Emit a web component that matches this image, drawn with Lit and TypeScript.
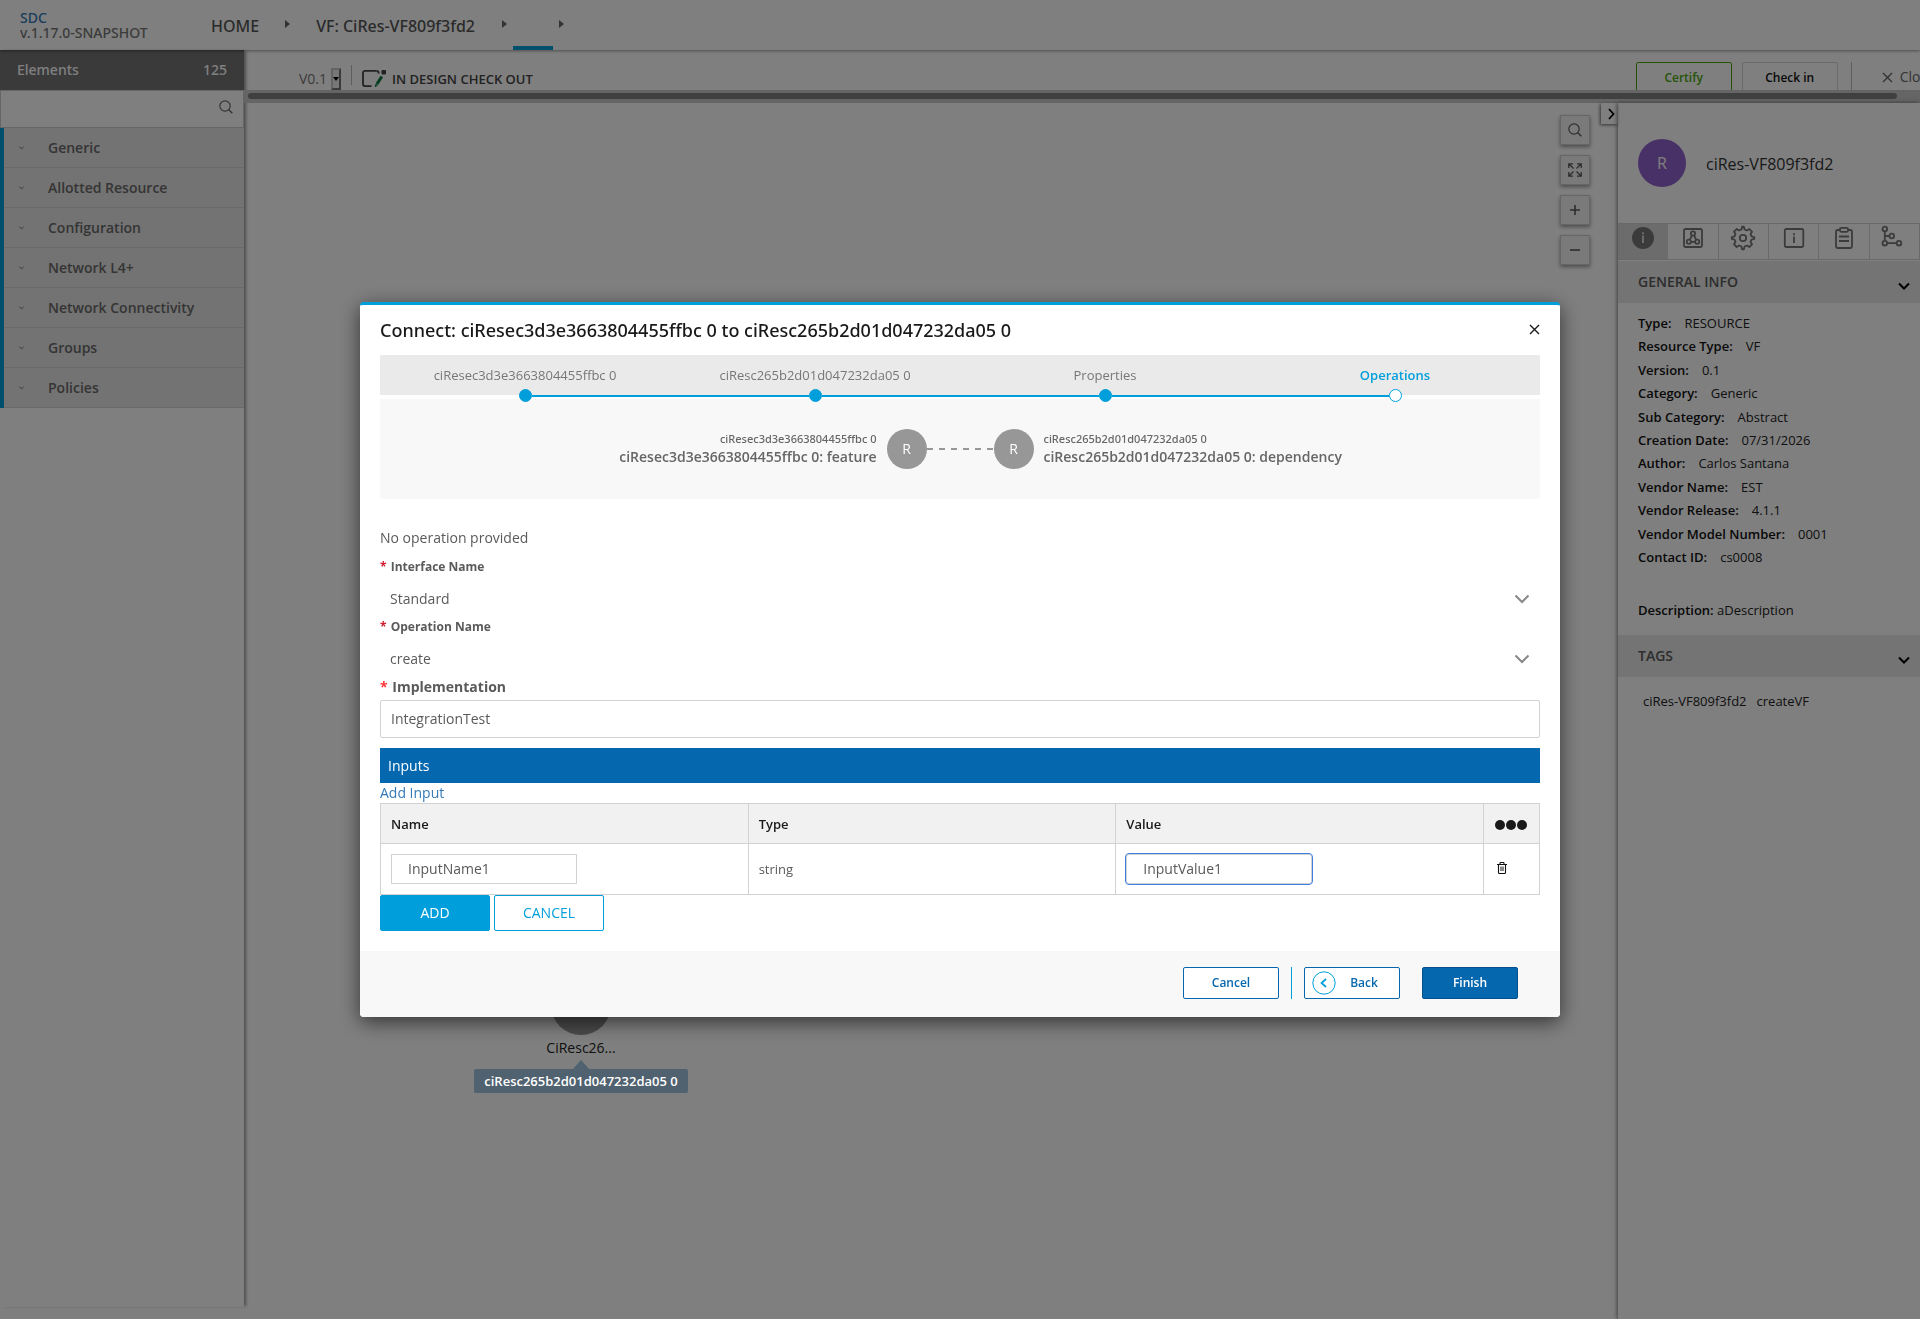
import { LitElement, html, css, svg } from "lit";
import { customElement, state } from "lit/decorators.js";
import { classMap } from "lit/directives/class-map.js";

const CATEGORIES = [
  "Generic",
  "Allotted Resource",
  "Configuration",
  "Network L4+",
  "Network Connectivity",
  "Groups",
  "Policies",
];

const DETAILS: [string, string][] = [
  ["Type:", "RESOURCE"],
  ["Resource Type:", "VF"],
  ["Version:", "0.1"],
  ["Category:", "Generic"],
  ["Sub Category:", "Abstract"],
  ["Creation Date:", "07/31/2026"],
  ["Author:", "Carlos Santana"],
  ["Vendor Name:", "EST"],
  ["Vendor Release:", "4.1.1"],
  ["Vendor Model Number:", "0001"],
  ["Contact ID:", "cs0008"],
];

const FROM_NAME = "ciResec3d3e3663804455ffbc 0";
const TO_NAME = "ciResc265b2d01d047232da05 0";
const STEPS = [FROM_NAME, TO_NAME, "Properties", "Operations"];

const icon = (width: number, height: number, body: unknown) => html`<svg
  class="icon"
  width=${width}
  height=${height}
  viewBox="0 0 ${width} ${height}"
  fill="none"
  stroke="currentColor"
  aria-hidden="true"
>
  ${body}
</svg>`;

const searchIcon = () =>
  icon(14, 14, svg`<circle cx="6" cy="6" r="5.2" stroke-width="1.2"/><path d="M9.8 9.8 13.3 13.3" stroke-width="1.4"/>`);
const expandIcon = () =>
  icon(14, 14, svg`<path stroke-width="1.3" d="M.8 5V.8H5M9 .8h4.2V5M13.2 9v4.200H9M5 13.200H.8V9M1 1l4.500 4.500M13 1 8.500 5.500M13 13 8.500 8.500M1 13l4.500-4.500"/>`);
const plusIcon = () => icon(12, 12, svg`<path stroke-width="1.6" d="M6 1v10M1 6h10"/>`);
const minusIcon = () => icon(12, 12, svg`<path stroke-width="1.6" d="M1 6h10"/>`);
const crossIcon = () => icon(11, 11, svg`<path stroke-width="1.4" d="M1 1l9 9M10 1l-9 9"/>`);
const chevronDown = () => icon(12, 8, svg`<path stroke-width="2" d="M1 1.500l5 5 5-5"/>`);
const chevronRight = () => icon(7, 12, svg`<path stroke-width="1.800" d="M1 1l4.500 5L1 11"/>`);
const selectChevron = () => icon(16, 10, svg`<path stroke-width="2" d="M1.500 1.500 8 8l6.500-6.500"/>`);
const tinyChevron = () => icon(5, 4, svg`<path d="M.5 1l2 1.700 2-1.700"/>`);
const caret = () => icon(5, 8, svg`<path d="M0 0l5 4-5 4z" fill="currentColor" stroke="none"/>`);

const checkoutIcon = () =>
  icon(25, 20, svg`
    <path stroke-width="1.800" d="M14.500 1.900H3a2 2 0 0 0-2 2v11.200a2 2 0 0 0 2 2h6.500"/>
    <path stroke-width="1.800" d="M14.500 1.900q2.200 0 2.200 2.600"/>
    <path d="M20 1.500h3.500V5H20z" fill="currentColor" stroke-width="1"/>
    <path class="pen" d="M19.800 7.500 15 15" stroke-width="3"/>
    <path class="pen" d="M13.200 17.800l.8-2.800 1.600 1.200z" stroke-width="1"/>`);

const trashIcon = () =>
  icon(10, 12, svg`
    <path d="M0 2.500h10M3 2.500V1.300q0-.8.800-.8h2.400q.8 0 .8.800v1.200M1.500 2.500v8q0 1 1 1h5q1 0 1-1v-8" stroke-width="1.100"/>
    <path d="M3 4.500h4v4.500H3z" fill="#888" stroke="none"/>`);

const backIcon = () =>
  icon(24, 24, svg`<circle cx="12" cy="12" r="11.200" stroke-width="1"/><path stroke-width="1.700" d="M14 8l-4.500 4 4.500 4"/>`);

const GEAR =
  "M13.90 1.76 L14.55 4.50 L16.94 5.49 L19.33 4.02 L22.00 6.67 L20.53 9.06 L21.52 11.45 L24.25 12.10 L24.25 13.90 L21.52 14.55 L20.53 16.94 L22.00 19.33 L19.33 22.00 L16.94 20.53 L14.55 21.52 L13.90 24.25 L12.10 24.25 L11.45 21.52 L9.06 20.53 L6.67 22.00 L4.02 19.33 L5.49 16.94 L4.50 14.55 L1.76 13.90 L1.76 12.10 L4.50 11.45 L5.49 9.06 L4.02 6.67 L6.67 4.02 L9.06 5.49 L11.45 4.50 L12.10 1.76 Z";

const TABS = [
  {
    label: "Information",
    art: svg`<circle cx="13" cy="13" r="11" fill="currentColor" stroke="none"/><path class="cut" d="M13 10.500V18M13 7.200v2" stroke-width="2"/>`,
  },
  {
    label: "Composition",
    art: svg`<rect x="4" y="4" width="18" height="18" rx="1.500"/><circle cx="13" cy="8.500" r="2.100"/><circle cx="8.800" cy="16.800" r="2.100"/><circle cx="17.200" cy="16.800" r="2.100"/><path d="M12 10.400 9.700 14.900M14 10.400l2.300 4.500M11 16.800h4"/>`,
  },
  {
    label: "Settings",
    art: svg`<path d=${GEAR} stroke-linejoin="round"/><circle cx="13" cy="13" r="3.200"/>`,
  },
  {
    label: "Details",
    art: svg`<rect x="3.800" y="4" width="18.500" height="18" rx="1.500"/><path d="M13 11.500V18M13 8.200v2"/>`,
  },
  {
    label: "Artifacts",
    art: svg`<path d="M9 5H6.500Q5 5 5 6.500v15Q5 23 6.500 23h13q1.500 0 1.500-1.500v-15Q21 5 19.500 5H17"/><rect x="9" y="2.800" width="8" height="4" rx="1.200"/><path d="M8 11.500h10M8 16h10"/>`,
  },
  {
    label: "Relations",
    art: svg`<circle cx="3.800" cy="4" r="2.300"/><circle cx="3.800" cy="18.200" r="2.300"/><circle cx="10.800" cy="11" r="2.300"/><circle cx="18" cy="18.200" r="2.300"/><path d="M3.800 6.300v9.600M6 18.200h9.600M3.800 11h4.600"/>`,
  },
];

@customElement("app-root")
export class AppRoot extends LitElement {
  static styles = css`
    :host {
      display: block;
      font-family: "Open Sans", "Noto Sans", sans-serif;
      font-size: 14px;
      line-height: 20px;
      color: #5a5a5a;
    }
    * {
      box-sizing: border-box;
    }
    button,
    input,
    select {
      font: inherit;
      color: inherit;
      margin: 0;
      padding: 0;
      border: 0;
      background: none;
      border-radius: 0;
    }
    button {
      cursor: pointer;
    }
    select {
      appearance: none;
    }
    a {
      text-decoration: none;
      color: inherit;
    }
    h1,
    h2,
    p,
    dl,
    dd,
    ol,
    ul {
      margin: 0;
      padding: 0;
      list-style: none;
      font-weight: 400;
    }
    .icon {
      display: block;
      flex: none;
    }
    .brand,
    .crumbs,
    .side-title,
    .modal-head h1,
    .end small {
      font-family: "Noto Sans", "Open Sans", sans-serif;
      font-weight: 500;
    }

    .page {
      display: flex;
      flex-direction: column;
      min-height: 100vh;
      background: #fff;
    }

    .top {
      display: flex;
      height: 50px;
      flex: none;
      box-shadow: 0 1px 3px rgba(0, 0, 0, 0.4);
      z-index: 1;
    }
    .brand {
      width: 211px;
      padding: 10px 20px;
      line-height: 15px;
      color: #777;
    }
    .brand a {
      display: block;
      color: #337ab7;
    }
    .crumbs {
      display: flex;
      align-items: center;
      font-size: 16px;
      color: #555;
    }
    .crumbs li {
      display: flex;
      align-items: center;
      height: 50px;
    }
    .crumbs a {
      padding-top: 2px;
    }
    .crumbs .sep {
      color: #666;
      padding: 0 26px 3px 26px;
    }
    .crumbs .current {
      width: 40px;
      border-bottom: 4px solid #009fdb;
    }
    .crumbs .sep.tight {
      padding: 0 6px 3px 27px;
    }
    .crumbs .sep.end {
      padding-left: 6px;
    }

    .content {
      display: flex;
      flex: 1;
    }
    .side {
      display: flex;
      flex-direction: column;
      width: 244px;
      flex: none;
      margin-bottom: 12px;
      background: #fff;
      box-shadow: 3px 0 3px -1px rgba(0, 0, 0, 0.4);
    }
    .side-title {
      display: flex;
      justify-content: space-between;
      align-items: center;
      height: 40px;
      padding: 0 17px;
      background: #747474;
      color: #fff;
    }
    .search {
      display: flex;
      align-items: center;
      height: 38px;
      padding-right: 10px;
      border: 1px solid #cdcdcd;
      color: #666;
    }
    .search input {
      flex: 1;
      min-width: 0;
      height: 34px;
      padding: 0 10px;
      outline: none;
    }
    .search button {
      padding-bottom: 4px;
    }
    .cats {
      border-left: 4px solid #009fdb;
    }
    .cats button {
      display: grid;
      grid-template-columns: 29px 1fr;
      align-items: center;
      width: 100%;
      height: 40px;
      padding-left: 15px;
      text-align: left;
      font-weight: 600;
      color: #6a6a6a;
      background: #e6e6e6;
      border-bottom: 1px solid #d2d2d2;
    }

    .main {
      display: flex;
      flex-direction: column;
      flex: 1;
      min-width: 0;
    }
    .toolbar {
      display: flex;
      justify-content: space-between;
      height: 40px;
      overflow: hidden;
    }
    .tools {
      display: flex;
      align-items: center;
      height: 57px;
      flex: none;
    }
    .version {
      display: grid;
      align-items: center;
      width: 42px;
      height: 22px;
      margin-left: 55px;
      color: #777;
    }
    .version select,
    .version span {
      grid-area: 1 / 1;
    }
    .version select {
      width: 42px;
    }
    .version span {
      display: flex;
      align-items: center;
      justify-content: center;
      justify-self: end;
      width: 10px;
      height: 22px;
      background: #efefef;
      border: 2px outset #c8c8c8;
      color: #000;
      pointer-events: none;
    }
    .rule {
      width: 1px;
      height: 20px;
      background: #bbb;
    }
    .tools .rule {
      margin: 0 10px 8px 10px;
    }
    .status {
      display: flex;
      align-items: center;
      gap: 5px;
      font-size: 13px;
      font-weight: 600;
      color: #444;
    }
    .pen {
      stroke: #067a3e;
    }
    .actions {
      display: flex;
      padding-top: 12px;
      flex: none;
      margin-right: -15px;
    }
    .actions .btn {
      width: 96px;
      height: 32px;
      margin-right: 10px;
      font-size: 12px;
      font-weight: 600;
      border: 1px solid #d2d2d2;
      border-radius: 2px;
      color: #111;
    }
    .actions .btn.ok {
      border-color: #4ca90c;
      color: #4ca90c;
    }
    .actions .rule {
      height: 32px;
      margin: 0 30px 0 3px;
    }
    .actions .close {
      display: flex;
      align-items: center;
      gap: 7px;
      height: 30px;
      color: #666;
    }
    .scroll {
      height: 13px;
      padding: 3px 23px 0 4px;
      background: #cacaca;
    }
    .scroll div {
      height: 6px;
      border-radius: 3px;
      background: #7c8280;
    }

    .work {
      display: flex;
      flex: 1;
    }
    .canvas {
      position: relative;
      display: flex;
      flex: 1;
      justify-content: flex-end;
      align-items: flex-start;
      gap: 11px;
    }
    .zooms {
      display: grid;
      gap: 10px;
      padding-top: 12px;
    }
    .zooms button {
      display: grid;
      place-items: center;
      width: 30px;
      height: 30px;
      background: #f4f4f4;
      border: 1px solid #ccc;
      box-shadow: 0 2px 4px rgba(0, 0, 0, 0.4);
    }
    .fold {
      display: grid;
      place-items: center;
      width: 17px;
      height: 21px;
      padding-left: 3px;
      color: #000;
      box-shadow: -1px 1px 3px rgba(0, 0, 0, 0.6);
    }
    .node {
      position: absolute;
      left: 230px;
      top: 872px;
      display: flex;
      flex-direction: column;
      align-items: center;
      width: 214px;
      color: #222;
    }
    .node .disc {
      width: 60px;
      height: 60px;
      border-radius: 50%;
      background: #959595;
    }
    .node .name {
      margin: 3px 0 2px;
    }
    .tip {
      position: relative;
      z-index: 20;
      display: flex;
      flex-direction: column;
      align-items: center;
      font-size: 13px;
      line-height: 24px;
      font-weight: 600;
      white-space: nowrap;
      color: #fff;
    }
    .tip i {
      border: 8px solid transparent;
      border-top: 0;
      border-bottom: 9px solid #50626f;
    }
    .tip span {
      padding: 0 10px;
      border-radius: 2px;
      background: #50626f;
    }

    .panel {
      width: 302px;
      flex: none;
      background: #fff;
      box-shadow: -1px 0 4px rgba(0, 0, 0, 0.5);
      font-size: 13px;
      color: #222;
    }
    .who {
      display: flex;
      align-items: center;
      gap: 20px;
      height: 120px;
      padding: 0 20px;
      font-size: 16px;
      color: #333;
    }
    .who .title {
      padding-top: 2px;
    }
    .who .disc {
      display: grid;
      place-items: center;
      width: 48px;
      height: 48px;
      border-radius: 50%;
      background: #9063cd;
      color: #fff;
    }
    .tabs {
      display: grid;
      grid-template-columns: repeat(6, 1fr);
      height: 37px;
      margin-bottom: 1px;
      border: solid #d2d2d2;
      border-width: 1px 0;
    }
    .tabs button {
      display: grid;
      justify-content: center;
      align-content: start;
      padding-top: 1px;
      border-right: 1px solid #d2d2d2;
      color: #777;
    }
    .tabs .icon {
      stroke-width: 1.8;
    }
    .tabs button.on {
      background: #d8d8d8;
      border-color: #d8d8d8;
    }
    .cut {
      stroke: #d8d8d8;
    }
    .fold-head {
      display: flex;
      justify-content: space-between;
      align-items: center;
      width: 100%;
      height: 42px;
      padding: 0 10px 0 20px;
      background: #e8e8e8;
      font-size: 14px;
      font-weight: 600;
      color: #5a5a5a;
    }
    .fold-head .icon {
      color: #000;
      margin-top: 8px;
    }
    .facts {
      display: grid;
      grid-auto-rows: 1fr;
      height: 258px;
      margin-top: 8px;
    }
    .facts div {
      display: flex;
      align-items: center;
      gap: 13px;
      padding-left: 20px;
    }
    .facts dt,
    .desc b {
      font-weight: 600;
      color: #111;
    }
    .desc {
      padding: 31px 20px 15px;
    }
    .tags {
      display: flex;
      gap: 10px;
      padding: 14px 25px;
    }

    .veil {
      position: fixed;
      inset: 0;
      z-index: 10;
      display: flex;
      align-items: center;
      justify-content: center;
      background: rgba(0, 0, 0, 0.5);
    }
    .lift {
      max-width: 100%;
      border-radius: 4px;
      box-shadow: 0 5px 20px rgba(0, 0, 0, 0.6);
    }
    .modal {
      width: 1200px;
      max-width: 100%;
      overflow: hidden;
      background: #fff;
      border-top: 3px solid #009fdb;
      border-radius: 4px;
    }
    .modal-head {
      display: flex;
      justify-content: space-between;
      align-items: center;
      height: 50px;
      padding: 0 20px;
      color: #191919;
    }
    .modal-head h1 {
      font-size: 18px;
      line-height: 24px;
      padding-bottom: 1px;
    }
    .modal-head .icon {
      margin-bottom: 2px;
    }
    .modal-body {
      padding: 0 20px 20px;
    }
    .steps {
      display: grid;
      grid-template-columns: repeat(4, 1fr);
      height: 40px;
      margin-bottom: 4px;
      background: #eaeaea;
      font-size: 13px;
      color: #777;
    }
    .steps li {
      display: grid;
      grid-template-columns: 1fr 13px 1fr;
      grid-template-rows: 34px 13px;
      align-items: center;
      height: 47px;
    }
    .steps span {
      grid-column: 1 / -1;
      padding-top: 6px;
      text-align: center;
    }
    .steps li::before,
    .steps li::after,
    .steps i {
      grid-row: 2;
      height: 2px;
      content: "";
      background: #009fdb;
    }
    .steps li:first-child::before,
    .steps li:last-child::after {
      background: none;
    }
    .steps li::before {
      grid-column: 1;
    }
    .steps li::after {
      grid-column: 3;
    }
    .steps i {
      grid-column: 2;
      height: 13px;
      border: 1px solid #009fdb;
      border-radius: 50%;
    }
    .steps .now {
      font-weight: 600;
      color: #009fdb;
    }
    .steps .now i {
      background: #fff;
    }

    .link {
      display: grid;
      grid-template-columns: 1fr 40px 67px 40px 1fr;
      align-items: center;
      height: 100px;
      background: #f8f8f8;
      color: #666;
    }
    .end {
      padding: 0 10px 2px;
      font-weight: 600;
      line-height: 18px;
    }
    .end small {
      display: block;
      font-size: 11px;
    }
    .end.from {
      text-align: right;
    }
    .disc {
      flex: none;
    }
    .link .disc {
      display: grid;
      place-items: center;
      width: 40px;
      height: 40px;
      border-radius: 50%;
      background: #979797;
      color: #fff;
    }
    .dash {
      height: 2px;
      background: repeating-linear-gradient(90deg, #979797 0 6px, transparent 6px 12px);
    }

    .note {
      padding: 29px 0 9px;
    }
    .field label {
      display: block;
      margin-bottom: 3px;
      font-size: 12px;
      line-height: 20px;
      font-weight: 700;
    }
    .req {
      color: #d02030;
      padding-right: 1px;
    }
    .pick {
      display: grid;
      align-items: center;
    }
    .pick select,
    .pick .icon {
      grid-area: 1 / 1;
    }
    .pick select {
      height: 37px;
      padding: 0 10px;
      background: none;
    }
    .pick .icon {
      justify-self: end;
      margin-right: 10px;
      color: #888;
      pointer-events: none;
    }
    .impl label {
      display: block;
      margin-bottom: 3px;
      line-height: 20px;
      font-weight: 700;
    }
    .impl .req {
      color: #f33;
    }
    .impl input {
      width: 100%;
      height: 38px;
      padding: 0 10px 1px;
      border: 1px solid #d2d2d2;
      border-radius: 2px;
    }
    .bar {
      height: 35px;
      margin-top: 10px;
      padding: 0 8px;
      font-size: 14px;
      line-height: 35px;
      background: #0568ae;
      color: #fff;
    }
    .add-link {
      display: block;
      color: #337ab7;
    }
    table {
      width: 100%;
      table-layout: fixed;
      border-collapse: collapse;
      font-size: 13px;
    }
    .c-tools {
      width: 56px;
    }
    th,
    td {
      border: 1px solid #d2d2d2;
      padding: 0 10px;
      text-align: left;
    }
    th {
      height: 40px;
      background: #f1f1f1;
      font-weight: 600;
      color: #191919;
    }
    td {
      height: 51px;
    }
    td input {
      display: block;
      width: 186px;
      height: 30px;
      padding: 0 16px 1px;
      border: 1px solid #d2d2d2;
      font-size: 14px;
    }
    td input:focus {
      outline: 1px solid #3b7fe0;
      border-radius: 3px;
    }
    td button {
      display: block;
      padding: 0 3px 2px;
      color: #111;
    }
    th .dots {
      display: flex;
      gap: 1px;
      padding-left: 1px;
      margin-top: 3px;
    }
    th .dots i {
      width: 10px;
      height: 10px;
      border-radius: 50%;
      background: #191919;
    }
    .row-actions {
      display: flex;
      gap: 4px;
    }
    .row-actions button {
      width: 110px;
      height: 36px;
      border: 1px solid #009fdb;
      border-radius: 2px;
      color: #009fdb;
    }
    .row-actions .fill {
      background: #009fdb;
      color: #fff;
    }
    .modal-foot {
      display: flex;
      justify-content: flex-end;
      align-items: center;
      height: 66px;
      padding: 0 42px 2px 0;
      background: #f8f8f8;
    }
    .modal-foot button {
      display: flex;
      align-items: center;
      justify-content: center;
      width: 96px;
      height: 32px;
      border: 1px solid #0568ae;
      border-radius: 2px;
      background: #fff;
      color: #0568ae;
      font-size: 12px;
      font-weight: 600;
    }
    .modal-foot .rule {
      height: 32px;
      margin: 0 12px;
      background: #009fdb;
    }
    .modal-foot .back {
      gap: 14px;
      padding-right: 14px;
      margin-right: 22px;
    }
    .modal-foot .back .icon {
      color: #009fdb;
    }
    .modal-foot .finish {
      background: #0568ae;
      border-color: #044f8c;
      color: #fff;
    }
  `;

  @state() private activeStep = 3;

  firstUpdated() {
    this.renderRoot.querySelector<HTMLInputElement>("#in-value")?.focus();
  }

  private header() {
    return html`<header class="top">
      <div class="brand"><a href="#">SDC</a><span>v.1.17.0-SNAPSHOT</span></div>
      <ul class="crumbs">
        <li><a href="#">HOME</a></li>
        <li class="sep">${caret()}</li>
        <li><a href="#">VF: CiRes-VF809f3fd2</a></li>
        <li class="sep tight">${caret()}</li>
        <li class="current"></li>
        <li class="sep end">${caret()}</li>
      </ul>
    </header>`;
  }

  private sidebar() {
    return html`<aside class="side">
      <div class="side-title"><span>Elements</span><span>125</span></div>
      <div class="search">
        <input type="text" aria-label="Search elements" />
        <button aria-label="Search">${searchIcon()}</button>
      </div>
      <ul class="cats">
        ${CATEGORIES.map((c) => html`<li><button>${tinyChevron()}<span>${c}</span></button></li>`)}
      </ul>
    </aside>`;
  }

  private toolbar() {
    return html`<div class="toolbar">
        <div class="tools">
          <div class="version">
            <select aria-label="Version"><option>V0.1</option></select>
            <span>${icon(6, 4, svg`<path d="M0 0h6L3 4z" fill="currentColor" stroke="none"/>`)}</span>
          </div>
          <div class="rule"></div>
          <div class="status">${checkoutIcon()}<span>IN DESIGN CHECK OUT</span></div>
        </div>
        <div class="actions">
          <button class="btn ok">Certify</button>
          <button class="btn">Check in</button>
          <div class="rule"></div>
          <button class="close">${crossIcon()}<span>Close</span></button>
        </div>
      </div>
      <div class="scroll"><div></div></div>`;
  }

  private canvas() {
    return html`<div class="canvas">
      <div class="node">
        <div class="disc"></div>
        <div class="name">CiResc26...</div>
        <div class="tip"><i></i><span>${TO_NAME}</span></div>
      </div>
      <div class="zooms">
        <button aria-label="Find">${searchIcon()}</button>
        <button aria-label="Fit">${expandIcon()}</button>
        <button aria-label="Zoom in">${plusIcon()}</button>
        <button aria-label="Zoom out">${minusIcon()}</button>
      </div>
      <button class="fold" aria-label="Collapse panel">${chevronRight()}</button>
    </div>`;
  }

  private panel() {
    return html`<aside class="panel">
      <div class="who"><span class="disc">R</span><span class="title">ciRes-VF809f3fd2</span></div>
      <div class="tabs">
        ${TABS.map(
          (t, i) => html`<button class=${classMap({ on: i === 0 })} aria-label=${t.label}>${icon(26, 26, t.art)}</button>`
        )}
      </div>
      <button class="fold-head"><span>GENERAL INFO</span>${chevronDown()}</button>
      <dl class="facts">
        ${DETAILS.map(([k, v]) => html`<div><dt>${k}</dt><dd>${v}</dd></div>`)}
      </dl>
      <p class="desc"><b>Description:</b> aDescription</p>
      <button class="fold-head"><span>TAGS</span>${chevronDown()}</button>
      <div class="tags"><span>ciRes-VF809f3fd2</span><span>createVF</span></div>
    </aside>`;
  }

  private dropdown(id: string, label: string, value: string) {
    return html`<div class="field">
      <label for=${id}><span class="req">*</span> ${label}</label>
      <div class="pick">
        <select id=${id}><option>${value}</option></select>
        ${selectChevron()}
      </div>
    </div>`;
  }

  private dialog() {
    return html`<div class="veil">
      <div class="lift">
        <section class="modal" role="dialog" aria-labelledby="dlg-title">
          <div class="modal-head">
            <h1 id="dlg-title">Connect: ${FROM_NAME} to ${TO_NAME}</h1>
            <button aria-label="Close dialog">${crossIcon()}</button>
          </div>
          <div class="modal-body">
            <ol class="steps">
              ${STEPS.map(
                (s, i) => html`<li class=${classMap({ now: i === this.activeStep })}><span>${s}</span><i></i></li>`
              )}
            </ol>
            <div class="link">
              <div class="end from"><small>${FROM_NAME}</small>${FROM_NAME}: feature</div>
              <div class="disc">R</div>
              <div class="dash"></div>
              <div class="disc">R</div>
              <div class="end"><small>${TO_NAME}</small>${TO_NAME}: dependency</div>
            </div>
            <p class="note">No operation provided</p>
            ${this.dropdown("iface", "Interface Name", "Standard")}
            ${this.dropdown("oper", "Operation Name", "create")}
            <div class="impl">
              <label for="impl"><span class="req">*</span> Implementation</label>
              <input id="impl" type="text" value="IntegrationTest" />
            </div>
            <h2 class="bar">Inputs</h2>
            <a class="add-link" href="#">Add Input</a>
            <table>
              <colgroup>
                <col /><col /><col /><col class="c-tools" />
              </colgroup>
              <thead>
                <tr>
                  <th>Name</th>
                  <th>Type</th>
                  <th>Value</th>
                  <th><span class="dots"><i></i><i></i><i></i></span></th>
                </tr>
              </thead>
              <tbody>
                <tr>
                  <td><input type="text" aria-label="Name" value="InputName1" /></td>
                  <td>string</td>
                  <td><input id="in-value" type="text" aria-label="Value" value="InputValue1" /></td>
                  <td><button aria-label="Delete input">${trashIcon()}</button></td>
                </tr>
              </tbody>
            </table>
            <div class="row-actions">
              <button class="fill">ADD</button>
              <button>CANCEL</button>
            </div>
          </div>
          <div class="modal-foot">
            <button>Cancel</button>
            <div class="rule"></div>
            <button class="back">${backIcon()}<span>Back</span></button>
            <button class="finish">Finish</button>
          </div>
        </section>
      </div>
    </div>`;
  }

  render() {
    return html`<div class="page">
        ${this.header()}
        <div class="content">
          ${this.sidebar()}
          <div class="main">
            ${this.toolbar()}
            <div class="work">${this.canvas()}${this.panel()}</div>
          </div>
        </div>
      </div>
      ${this.dialog()}`;
  }
}
